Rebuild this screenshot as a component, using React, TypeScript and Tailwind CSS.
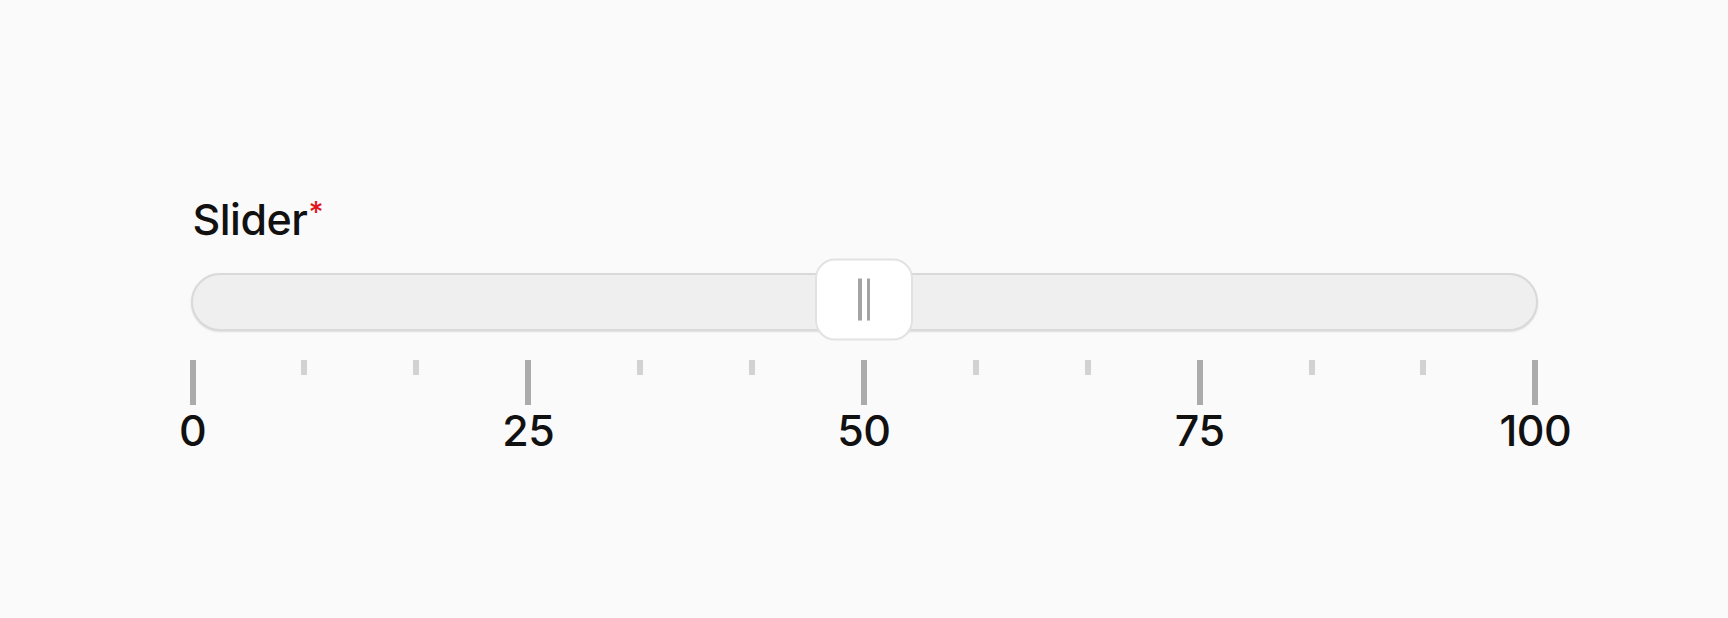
import React from "react";

// 13 stops from 0 to 100; every third one is a labelled major tick
const TICKS = Array.from({ length: 13 }, (_, i) => ({
  major: i % 3 === 0,
  label: i % 3 === 0 ? String((i / 3) * 25) : null,
}));

const SliderField = () => {
  return (
    <div className="w-[1347px] mx-auto">
      <label className="block pl-[2px] text-[43px] font-[450] leading-none text-[#111111] tracking-[-0.5px]">
        Slider
        <span className="relative -top-[13px] ml-[1px] text-[#e3161b] text-[29px] leading-none">*</span>
      </label>

      <div className="relative mt-[32px] h-[58px] rounded-full border-2 border-[#d9d9d9] bg-[#efefef] shadow-[0_1px_2px_rgba(0,0,0,0.12)]">
        <div className="absolute left-1/2 top-1/2 -translate-x-1/2 -translate-y-[53%] w-[98px] h-[82px] rounded-[20px] border-2 border-[#e2e2e2] bg-white flex items-center justify-center gap-[5px]">
          <span className="block w-[3.5px] h-[42px] bg-[#a3a3a3]" />
          <span className="block w-[3.5px] h-[42px] bg-[#a3a3a3]" />
        </div>
      </div>

      <div className="mt-[29px] px-[2px] flex justify-between">
        {TICKS.map((t, i) => (
          <div key={i} className="w-0 flex flex-col items-center">
            {t.major ? (
              <div className="w-[6px] h-[45px] shrink-0 bg-[#ababab]" />
            ) : (
              <div className="w-[6px] h-[15px] shrink-0 bg-[#d2d2d2]" />
            )}
            {t.label && (
              <span className="mt-[4px] text-[43px] font-[450] leading-none text-[#111111] tracking-[-0.5px] whitespace-nowrap">
                {t.label}
              </span>
            )}
          </div>
        ))}
      </div>
    </div>
  );
};

export default function App() {
  return (
    <div
      className="w-full h-[618px] bg-[#fafafa] pt-[198px]"
      style={{ fontFamily: "Inter, 'Noto Sans', sans-serif" }}
    >
      <SliderField />
    </div>
  );
}
